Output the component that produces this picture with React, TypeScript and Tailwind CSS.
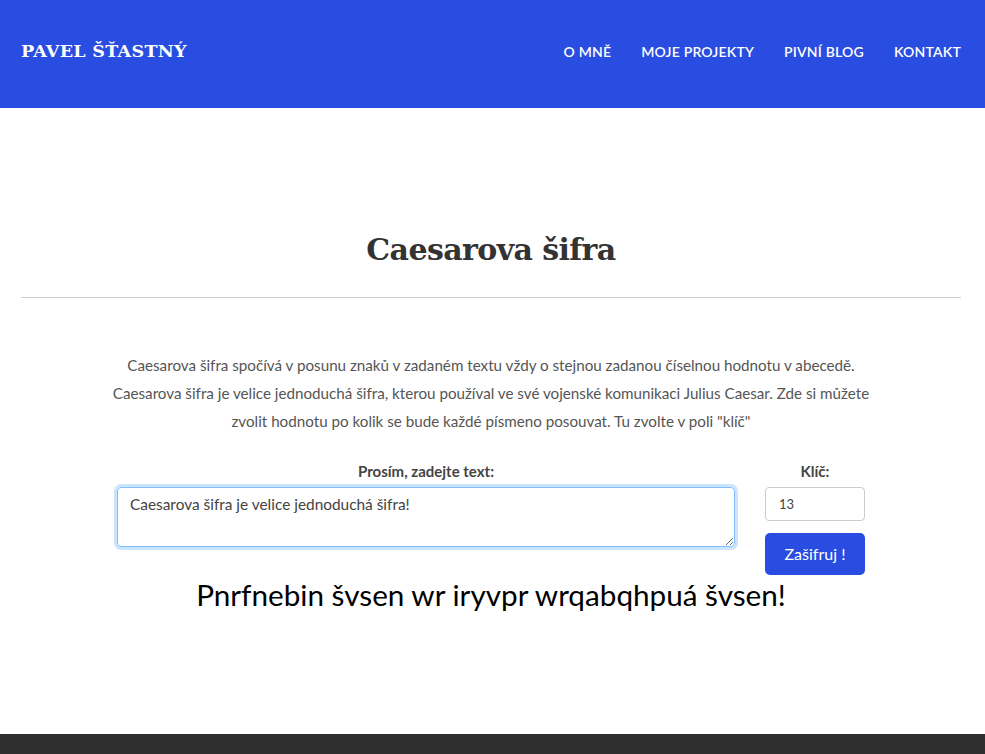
import React from "react";

export default function App() {
  const body = { fontFamily: "Lato, 'Noto Sans', sans-serif" };
  const slab = { fontFamily: "'DejaVu Serif', serif" };
  return (
    <div className="min-h-[754px] flex flex-col bg-white" style={body}>
      <header className="h-[108px] bg-[#2a4de1] flex items-center justify-between pl-[21px] pr-[24px] pb-[6px]">
        <div className="text-white text-[17.5px] font-bold tracking-[0.3px]" style={slab}>PAVEL ŠŤASTNÝ</div>
        <nav className="flex gap-[30px] text-white text-[14px] font-semibold tracking-[0.2px]">
          <a>O MNĚ</a>
          <a>MOJE PROJEKTY</a>
          <a>PIVNÍ BLOG</a>
          <a>KONTAKT</a>
        </nav>
      </header>
      <main className="flex-1 pl-[21px] pr-[24px] pt-[122px]">
        <h1 className="text-center text-[30px] font-bold text-[#333] leading-[40px] tracking-[-0.6px]" style={slab}>Caesarova šifra</h1>
        <hr className="mt-[27px] border-t border-[#cfcfcf]" />
        <p className="mt-[53px] text-center text-[15.2px] leading-[28px] text-[#555] whitespace-nowrap">
          Caesarova šifra spočívá v posunu znaků v zadaném textu vždy o stejnou zadanou číselnou hodnotu v abecedě.
          <br />
          Caesarova šifra je velice jednoduchá šifra, kterou používal ve své vojenské komunikaci Julius Caesar. Zde si můžete
          <br />
          zvolit hodnotu po kolik se bude každé písmeno posouvat. Tu zvolte v poli "klíč"
        </p>
        <div className="mx-auto mt-[26px] w-[748px] flex gap-[30px]">
          <div className="flex-1 flex flex-col">
            <label className="text-center text-[15px] font-bold text-[#444] leading-[20px]">Prosím, zadejte text:</label>
            <textarea
              className="mt-[6px] h-[60px] rounded-[4px] border border-[#80bdff] shadow-[0_0_0_3px_rgba(0,123,255,0.2)] px-[12px] py-[5px] text-[15.4px] text-[#444] outline-none resize-y"
              style={body}
              defaultValue="Caesarova šifra je velice jednoduchá šifra!"
            />
          </div>
          <div className="w-[100px] flex flex-col">
            <label className="text-center text-[15px] font-bold text-[#444] leading-[20px]">Klíč:</label>
            <input
              className="mt-[6px] h-[34px] rounded-[4px] border border-[#ccc] px-[13px] text-[13px] text-[#444] outline-none"
              style={body}
              defaultValue="13"
            />
            <button className="mt-[12px] h-[42px] rounded-[5px] bg-[#2a4de1] text-white text-[16px]" style={body}>Zašifruj !</button>
          </div>
        </div>
        <div className="text-center text-[29.7px] text-black leading-[36px] mt-[2px]">Pnrfnebin švsen wr iryvpr wrqabqhpuá švsen!</div>
      </main>
      <footer className="h-[20px] bg-[#2f2f2f]" />
    </div>
  );
}
